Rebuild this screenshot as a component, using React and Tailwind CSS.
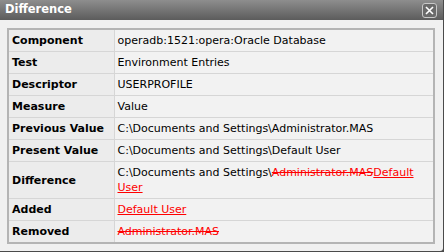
import React from 'react';

const rows = [
    { label: 'Component', value: 'operadb:1521:opera:Oracle Database' },
    { label: 'Test', value: 'Environment Entries' },
    { label: 'Descriptor', value: 'USERPROFILE' },
    { label: 'Measure', value: 'Value' },
    { label: 'Previous Value', value: 'C:\\Documents and Settings\\Administrator.MAS' },
    { label: 'Present Value', value: 'C:\\Documents and Settings\\Default User' },
    {
        label: 'Difference',
        value: (
            <>
                C:\Documents and Settings\
                <span className="text-[#ff0000] line-through">Administrator.MAS</span>
                <span className="text-[#ff0000] underline">Default User</span>
            </>
        ),
    },
    { label: 'Added', value: <span className="text-[#ff0000] underline">Default User</span> },
    { label: 'Removed', value: <span className="text-[#ff0000] line-through">Administrator.MAS</span> },
];

const App = () => {
    return (
        <div className="w-[444px] h-[252px] bg-[#4a4a4a] font-['DejaVu_Sans',sans-serif] text-[11px]">
            <div className="w-[443px] h-[251px] bg-[#f0f0f0] rounded-br-[3px] flex flex-col overflow-hidden">
                <div className="h-[20px] flex items-center justify-between pl-[5px] pr-[6px] bg-gradient-to-b from-[#8e8e8e] to-[#5c5c5c]">
                    <span className="text-white font-bold text-[11.5px] leading-none">Difference</span>
                    <button className="w-[15px] h-[15px] rounded-[3px] border border-[#c8c8c8] flex items-center justify-center bg-[#6a6a6a]">
                        <svg width="9" height="9" viewBox="0 0 9 9">
                            <path d="M1 1L8 8M8 1L1 8" stroke="#fff" strokeWidth="1.6" />
                        </svg>
                    </button>
                </div>
                <div className="pt-[8px] pl-[7px] pr-[8px]">
                    <table className="w-full border-collapse border-2 border-[#b4b4b4] leading-[15px] text-black">
                        <tbody>
                            {rows.map(row => (
                                <tr key={row.label} className="border-b border-[#d6d6d6]">
                                    <td className="w-[106px] bg-[#ececec] border-r border-[#d6d6d6] px-[3px] py-[3px] font-bold">
                                        {row.label}
                                    </td>
                                    <td className="bg-[#f2f2f2] px-[3px] py-[3px]">{row.value}</td>
                                </tr>
                            ))}
                        </tbody>
                    </table>
                </div>
            </div>
        </div>
    );
};

export default App;
